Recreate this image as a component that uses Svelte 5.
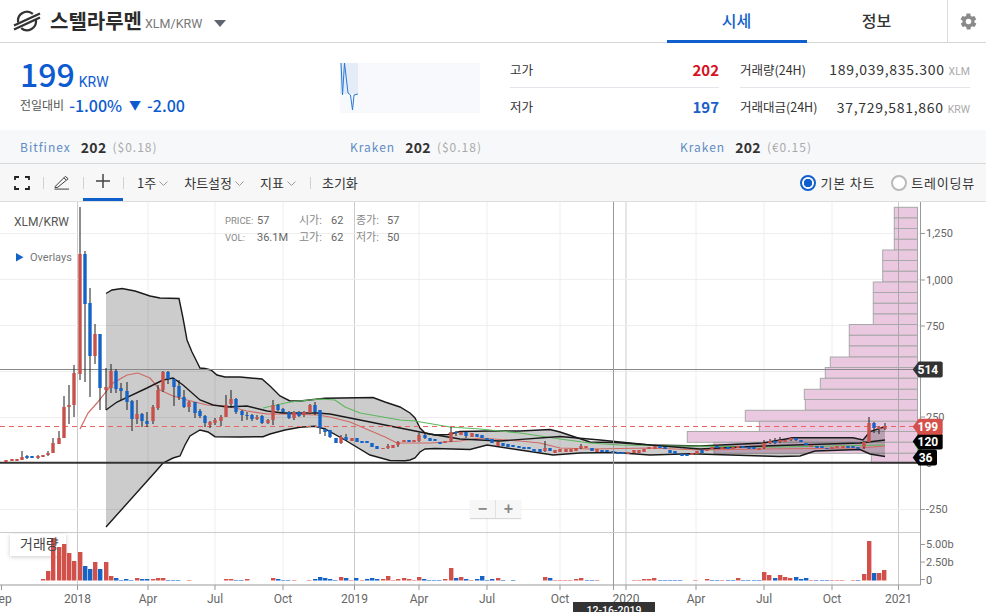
<script>
  const exchanges = [
    { name: 'Bitfinex', price: '202', sub: '($0.18)' },
    { name: 'Kraken', price: '202', sub: '($0.18)' },
    { name: 'Kraken', price: '202', sub: '(€0.15)' }
  ]

  // grid
  const monthLines = [148, 215, 283, 419, 487, 560, 696, 764, 832]
  const yearLines = [77.5, 354.5, 626, 898.5]
  const priceLines = [233.5, 279.5, 325.5, 371.5, 417.5, 509.5]
  const priceLabels = [['1,250', 237], ['1,000', 283.5], ['750', 329.5], ['250', 420.5], ['-250', 513]]
  const timeLabels = [['Sep', 1.5], ['2018', 77.5], ['Apr', 148], ['Jul', 215], ['Oct', 283], ['2019', 354.5], ['Apr', 419], ['Jul', 487], ['Oct', 560], ['2020', 626], ['Apr', 696], ['Jul', 764], ['Oct', 832], ['2021', 898.5]]

  // volume profile rows: left edge, top, bottom
  const profile = [
    [894.3, 207.3, 218], [894.3, 218, 228.5], [894.3, 228.5, 239.3], [894.3, 239.3, 250],
    [882.7, 250, 260.5], [882.7, 260.5, 271.3], [882.7, 271.3, 282],
    [873.3, 282, 292.5], [873.3, 292.5, 303.3], [873.3, 303.3, 314], [873.3, 314, 324.5],
    [849.3, 324.5, 335.3], [849.3, 335.3, 346], [849.3, 346, 357],
    [830.3, 357, 367.5], [825.3, 367.5, 378.3], [820.3, 378.3, 389.3], [804.3, 389.3, 399.5], [805.3, 399.5, 410.3],
    [745.3, 410.3, 421.3], [759.3, 421.3, 431.5], [687.3, 431.5, 442.3], [714, 442.3, 453.3], [871.3, 453.3, 463]
  ]

  // bollinger band + moving averages
  const upper = '106,293.5 112,290 122,288.5 135,291 150,296 160,298 179,298.5 183,318 187,340 192,352 196,360 200,368 205,368.5 211,370 217,375 225,377 240,377 262,379 270,386 280,396 290,401 300,401 325,398.3 373,397.5 385,402 400,407 410,413 415,418 420,428 425,433 435,435 448,434.5 460,431.5 490,431 520,431 550,429.5 560,432 575,437 590,442 615,442.5 650,445 700,446 763,443 793,437.7 853,437.7 863,440 870,431.7 885,426.7'
  const lower = '885,456.5 870,454 860,449.5 830,450.5 815,451 800,456 780,456.5 763,456 690,453.8 650,455 615,452.5 580,453 553,455 520,450 487,445 470,449.5 435,448.5 425,449 420,452 415,458 410,460 405,460.7 390,460.5 370,455 345,440 325,429 315,426.3 300,427.3 285,430 270,434 263,436.7 240,437 215,436.7 208,432 200,430 190,436 185,445 180,456 173,458 163,463 157,470 106,527'
  const midLine = '106,410 117,402 147,388 163,380 173,378 183,385 200,400 213,405 227,407 247,406 267,411 283,413 317,413 330,414 360,420 400,428 430,434 460,439 500,441 560,436.5 600,440 650,445 700,449 763,446 860,443 885,440'
  const redLine = '80,429 88,413 97,403 113,383 127,375 138,373 150,378 160,390 173,396 187,400 207,405 227,406 247,411 267,414 287,414 317,415 330,417 350,422 385,437 397,443 430,443 460,441 480,438 520,441 540,443 560,448 590,449 650,448 700,450 763,449 860,448 885,446'
  const greenLine = '263,408 290,402 320,399 335,400 345,407 360,413 400,420 415,421 450,427 480,429 520,433 560,439 590,443 620,445 680,446 780,447 885,445'

  // candles: x colour top bottom wickTop wickBottom
  const candleData = '6r460,462 12r459,461 17r459,461 22r457,460,451,460 27b456,458,455,459 32b456,458 38r456,458,455,459 43r455,457 48r453,455,451,456 53r443,453,438,453 59r438,444,431,444 64r407,438,396,438 69r405,407,385,424 74r373,405,365,417 80r254,374,207,380 85b254,304,251,382 90b303,356,288,397 95r334,356,324,364 100b334,388,334,410 106r387,390,368,410 111r371,388,364,393 116b371,389,369,393 121b388,391,383,400 127b391,402,382,410 132b401,419,400,431 137r414,419,400,424 142b414,421,413,427 147b421,424,412,427 153r407,421,405,424 158r390,408,385,410 163r372,390,371,392 168b372,379,371,384 174b379,387,378,406 179b386,397,380,400 184b397,407,390,408 189r402,407,401,412 195b402,413,403,418 200b411,416,409,418 205b416,423,415,427 210r422,425,421,428 215r420,423,418,425 221r417,421,415,426 226r405,417,395,417 231r399,404,390,408 236b399,412,398,414 242b411,415,410,421 247b415,416,412,420 252b415,419,414,421 257r417,419,415,420 262b416,423,415,424 268r420,423,419,424 273r405,420,400,425 278b405,410,404,411 283b409,412,408,413 289b412,418,411,419 294r412,418,411,420 299b412,416,411,417 304r412,415,411,417 310r405,413,404,414 315b405,412,402,415 320b410,428,410,434 325b429,432,428,436 330b430,437,430,438 336b438,443 341r437,443,435,444 346b437,440,434,441 352r438,441 357b438,442 362b441,443 367b441,443 372b443,447 377b446,449 383r448,449 388r446,448,444,449 393r445,448 398r442,445,441,447 404r440,442 409b440,442 414r440,442 419r435,441,433,442 425b435,438,433,439 430b438,441 435b439,441 440b442,444 445r441,443 451r432,441,427,442 456b432,433,431,436 461r432,435 466b432,436,431,438 472r433,437 477b434,437 482b435,438 487b438,440 492b439,443 498r442,446,441,447 503b443,446 508b444,447 513b445,447 519b446,448 524b447,449 529b447,449 534b449,452 540b449,452 545r448,451,441,452 550b448,451 555r450,453 560r449,452 566r449,452 571r449,452 576r448,451 581r446,448,444,449 586r446,448 592b448,451 597r449,452 602b450,452 607b450,452 613b451,453 618b452,454 623b452,454 628r452,454 634r450,453 639r450,453 644r449,452 649r447,449 655r446,449 660b446,448 665b447,449 670b450,453 675b451,454 682b454,456 687b454,456 692r453,455 697r451,454 702b450,453 707r449,451 712r447,449 717b446,448 722r447,449 728b447,449 733r447,449 738r446,448 743b446,448 749b447,449 754b447,449 759r448,450 764r443,448,440,449 770r441,443,439,444 775b441,443,438,444 780r440,442,437,443 785r440,442 791r438,440,437,441 796b438,440,437,441 801b440,442 806b443,445 811r445,447 817b446,448 822b446,448 827b448,449 832r447,449 837r446,448 843r446,448 848b446,448 853b446,448 858b447,449 864r442,447,441,449 869r423,442,417,442 874b423,428,422,433 879r427,429,426,434 885r426,429,423,430'
  const candles = candleData.split(' ').map((item) => {
    const match = item.match(/^(\d+)([rb])(.+)$/)
    const [top, bottom, wickTop = top, wickBottom = bottom] = match[3].split(',').map(Number)
    return { x: +match[1], up: match[2] === 'r', top, bottom, wickTop, wickBottom }
  })

  // volume: x colour top (580 = only the pale dash)
  const volumeData = '43r579 48r571 53r538 59r547 64r544 69r553 74r561 80r552 85b566 90b569 95r562 100b569 106r562 111r576 116b578 121b580 126b579 131b580 137r578 142b579 147b579 153r579 158r578 163r578 168b580 173b580 178b580 189r580 226r579 231r579 236b580 241b580 247r579 273r578 278b579 283b580 288b580 294r580 309r580 315b579 320b577 325b578 330b579 335b580 341r577 346b578 351r580 356b578 362r580 367b579 372b578 377b579 383r579 388r576 393r580 398r579 404r578 409r579 414r580 419r577 424b579 429b580 434b580 439b580 445r579 451r568 456b578 461r577 466b579 471r580 477b579 482b576 487b580 492b579 498r578 503b580 513b580 545r577 550b578 555r580 560r580 565r580 570r580 576r579 581r578 587b580 592b580 597r580 634r580 639r580 644r579 649r579 654r578 660b580 665b580 670b580 675b580 680b580 695r580 707r579 712b580 717b580 722r580 728b580 733b580 738r578 743b580 748b580 754b580 759b580 764r572 769r575 775b578 780r575 785r577 790r578 796b577 801b579 806b578 811r580 816b580 822b580 827b580 832r580 837r580 842r580 853r580 858b580 864r574 869r541 874b573 879r573 884r570'
  const volumes = volumeData.split(' ').map((item) => {
    const match = item.match(/^(\d+)([rb])(\d+)$/)
    return { x: +match[1], up: match[2] === 'r', top: +match[3] }
  })

  const priceTags = [
    { y: 369.5, label: '514', right: 942.7, fill: '#333333' },
    { y: 441.5, label: '120', right: 942.7, fill: '#000000' },
    { y: 457.5, label: '36', right: 937, fill: '#000000' },
    { y: 426.8, label: '199', right: 942.7, fill: '#d5504a' }
  ]
</script>

<div class="page">
  <header class="top">
    <div class="coin">
      <svg class="logo" viewBox="0 0 28 24" width="28" height="24">
        <path d="M5.2 13.5a9 9 0 0 1 14.6-8.6M22.8 10.5a9 9 0 0 1-14.6 8.6" fill="none" stroke="#333" stroke-width="2.2" />
        <path d="M1 16.5 27 4.5M1 20.5 27 8.5" fill="none" stroke="#333" stroke-width="2.4" />
      </svg>
      <h1>스텔라루멘</h1>
      <span class="pair">XLM/KRW</span>
      <span class="caret"></span>
    </div>
    <nav class="tabs">
      <span class="tab tab--active">시세</span>
      <span class="tab">정보</span>
    </nav>
    <div class="gear">
      <svg viewBox="0 0 24 24" width="19" height="19">
        <path fill="#8a8a8a" d="M19.4 13c.1-.3.1-.7.1-1s0-.7-.1-1l2.1-1.6c.2-.2.2-.4.1-.6l-2-3.5c-.1-.2-.4-.3-.6-.2l-2.5 1a7 7 0 0 0-1.7-1l-.4-2.6c0-.3-.2-.5-.5-.5h-4c-.3 0-.5.2-.5.5l-.4 2.6c-.6.3-1.2.6-1.7 1l-2.5-1c-.2-.1-.5 0-.6.2l-2 3.5c-.1.2-.1.5.1.6L4.6 11c-.1.3-.1.7-.1 1s0 .7.1 1l-2.1 1.6c-.2.2-.2.4-.1.6l2 3.5c.1.2.4.3.6.2l2.5-1c.5.4 1.1.7 1.7 1l.4 2.6c0 .3.2.5.5.5h4c.3 0 .5-.2.5-.5l.4-2.6c.6-.3 1.2-.6 1.7-1l2.5 1c.2.1.5 0 .6-.2l2-3.5c.1-.2.1-.5-.1-.6L19.4 13zM12 15.5a3.5 3.5 0 1 1 0-7 3.5 3.5 0 0 1 0 7z" />
      </svg>
    </div>
  </header>

  <section class="summary">
    <div class="price">
      <div class="price__now"><strong>199</strong><span>KRW</span></div>
      <div class="price__change">
        <span class="price__label">전일대비</span>
        <b>-1.00%</b>
        <b class="price__arrow">▼</b>
        <b>-2.00</b>
      </div>
    </div>
    <div class="spark">
      <svg viewBox="340 63 140 50" width="140" height="50">
        <rect x="340" y="63" width="140" height="50" fill="#f7f9fc" />
        <rect x="340" y="63" width="18" height="31" fill="#e4ecf7" />
        <polyline points="341,63 342.5,95 344.5,63 348,93 350.5,95 352.5,110 354,95 358,94" fill="none" stroke="#2a78d2" stroke-width="1" />
      </svg>
    </div>
    <dl class="range">
      <div class="row"><dt>고가</dt><dd class="up">202</dd></div>
      <div class="row"><dt>저가</dt><dd class="down">197</dd></div>
    </dl>
    <dl class="volume">
      <div class="row"><dt>거래량(24H)</dt><dd>189,039,835.300 <small>XLM</small></dd></div>
      <div class="row"><dt>거래대금(24H)</dt><dd>37,729,581,860 <small>KRW</small></dd></div>
    </dl>
  </section>

  <section class="markets">
    {#each exchanges as ex}
      <div class="market">
        <span class="market__name">{ex.name}</span>
        <b>{ex.price}</b>
        <span class="market__sub">{ex.sub}</span>
      </div>
    {/each}
  </section>

  <div class="toolbar">
    <span class="tool">
      <svg viewBox="0 0 16 14" width="16" height="14"><path d="M1 4V1h4M11 1h4v3M15 10v3h-4M5 13H1v-3" fill="none" stroke="#222" stroke-width="1.8" /></svg>
    </span>
    <i class="sep"></i>
    <span class="tool">
      <svg viewBox="0 0 17 15" width="16" height="15"><path d="M1.5 11.5 10.5 2.5l2.6 2.6-9 7.4-3 .5zM10.5 2.5 12 1l3 2.5-1.9 1.6M.5 14.5h15.5" fill="none" stroke="#333" stroke-width="1" /></svg>
    </span>
    <i class="sep"></i>
    <span class="tool tool--active">
      <svg viewBox="0 0 15 15" width="14" height="14"><path d="M7.5 0v15M0 7.5h15" stroke="#444" stroke-width="1.6" /></svg>
    </span>
    <i class="sep"></i>
    <span class="menu menu--period">1주<svg class="chev" viewBox="0 0 9 5" width="9" height="5"><path d="M.5.5l4 4 4-4" fill="none" stroke="#999" /></svg></span>
    <span class="menu">차트설정<svg class="chev" viewBox="0 0 9 5" width="9" height="5"><path d="M.5.5l4 4 4-4" fill="none" stroke="#999" /></svg></span>
    <span class="menu">지표<svg class="chev" viewBox="0 0 9 5" width="9" height="5"><path d="M.5.5l4 4 4-4" fill="none" stroke="#999" /></svg></span>
    <i class="sep sep--reset"></i>
    <span class="menu">초기화</span>
    <div class="views">
      <label class="view"><span class="radio radio--on"></span>기본 차트</label>
      <label class="view"><span class="radio"></span>트레이딩뷰</label>
    </div>
  </div>

  <div class="chart">
    <svg class="plot" viewBox="0 202 986 410" width="986" height="410">
      {#each monthLines as x}
        <line x1={x} x2={x} y1="202" y2="585" stroke="#eeeeee" />
      {/each}
      {#each yearLines as x}
        <line x1={x} x2={x} y1="202" y2="585" stroke="#cccccc" />
      {/each}
      {#each priceLines as y}
        <line x1="0" x2="920" y1={y} y2={y} stroke="#eeeeee" />
      {/each}

      {#each profile as [left, top, bottom]}
        <rect x={left} y={top} width={917.5 - left} height={bottom - top} fill="#e9c8e0" stroke="#a8a8a8" />
      {/each}
      <line x1="898.5" x2="898.5" y1="207" y2="463" stroke="#a8a8a8" />

      <polygon points={upper + ' ' + lower} fill="rgba(0,0,0,0.2)" />
      <polyline points={upper} class="band" />
      <polyline points={lower} class="band" />
      <polyline points={greenLine} fill="none" stroke="#5cb85c" stroke-width="1.2" />
      <polyline points={redLine} fill="none" stroke="#cf6a64" stroke-width="1.2" />
      <polyline points={midLine} class="band" />

      <line x1="0" x2="920" y1="426.5" y2="426.5" stroke="#e8645e" stroke-dasharray="5 4" />
      <line x1="0" x2="920" y1="369.5" y2="369.5" stroke="#888888" />
      <line x1="0" x2="920" y1="462.8" y2="462.8" stroke="#333333" stroke-width="2" />

      {#each candles as c}
        <line x1={c.x} x2={c.x} y1={c.wickTop} y2={c.wickBottom} stroke="#1c1c1c" />
        <rect x={c.x - 1.7} y={c.top} width="3.4" height={c.bottom - c.top} fill={c.up ? '#c8504a' : '#1563c7'} />
      {/each}

      <line x1="613.5" x2="613.5" y1="202" y2="590" stroke="#999999" />

      <rect class="vol-tag" x="10" y="534" width="56" height="22" fill="#ffffff" />
      <line x1="0" x2="920" y1="532.5" y2="532.5" stroke="#cccccc" />
      {#each volumes as v}
        <rect x={v.x - 2} y="580" width="4.4" height="1" fill={v.up ? '#f0a8a4' : '#7faae6'} />
        {#if v.top < 580}
          <rect x={v.x - 2} y={v.top} width="4.4" height={580 - v.top} fill={v.up ? '#d1504a' : '#1563c7'} />
        {/if}
      {/each}
      <text class="vol-label" x="20" y="549">거래량</text>

      <text class="symbol" x="14" y="226">XLM/KRW</text>
      <path d="M16 253v8.5l7.5-4.25z" fill="#1563c7" />
      <text class="overlays" x="30" y="261">Overlays</text>

      <text class="legend" x="225" y="224">PRICE:</text>
      <text class="legend legend--value" x="257" y="224">57</text>
      <text class="legend legend--ko" x="299" y="224">시가:</text>
      <text class="legend legend--value" x="331" y="224">62</text>
      <text class="legend legend--ko" x="356" y="224">종가:</text>
      <text class="legend legend--value" x="387" y="224">57</text>
      <text class="legend" x="225" y="241">VOL:</text>
      <text class="legend legend--value" x="257" y="241">36.1M</text>
      <text class="legend legend--ko" x="299" y="241">고가:</text>
      <text class="legend legend--value" x="331" y="241">62</text>
      <text class="legend legend--ko" x="356" y="241">저가:</text>
      <text class="legend legend--value" x="387" y="241">50</text>

      <line x1="920.5" x2="920.5" y1="202" y2="585" stroke="#999999" />
      <line x1="0" x2="920.5" y1="585" y2="585" stroke="#999999" />
      {#each priceLabels as [label, y]}
        <line x1="920" x2="925" y1={y - 3.5} y2={y - 3.5} stroke="#999999" />
        <text class="axis" x="926" {y}>{label}</text>
      {/each}
      <text class="axis" x="926" y="467">0</text>
      <line x1="920" x2="925" y1="544.5" y2="544.5" stroke="#999999" />
      <text class="axis" x="926" y="548">5.00b</text>
      <line x1="920" x2="925" y1="562" y2="562" stroke="#999999" />
      <text class="axis" x="926" y="566">2.50b</text>
      <line x1="920" x2="925" y1="579.5" y2="579.5" stroke="#999999" />
      <text class="axis" x="926" y="583.5">0</text>

      {#each timeLabels as [label, x]}
        <line x1={x} x2={x} y1="585" y2="590" stroke="#999999" />
        <text class="time" {x} y="603">{label}</text>
      {/each}

      <polygon points="914.5,445 918,441 923,448 920,452" fill="#55c455" />
      {#each priceTags as tag}
        <path d="M912.7 {tag.y}l6-8h{tag.right - 920.7}a2 2 0 0 1 2 2v12a2 2 0 0 1-2 2h-{tag.right - 920.7}z" fill={tag.fill} />
        <text class="tag" x={tag.right - 4.5} y={tag.y + 4.5}>{tag.label}</text>
      {/each}

      <rect x="573" y="602" width="82" height="12" fill="#333333" />
      <text class="cross-date" x="614" y="614">12-16-2019</text>
    </svg>
    <div class="zoom">
      <span>−</span>
      <span>+</span>
    </div>
  </div>
</div>

<style>
  :global(body) {
    overflow: hidden;
    background: #fff;
  }

  .page {
    width: 986px;
    height: 612px;
    display: flex;
    flex-direction: column;
    font-family: "Noto Sans CJK KR", "Noto Sans", sans-serif;
    color: #333;
  }

  .top {
    height: 42px;
    display: flex;
    align-items: stretch;
    border-bottom: 1px solid #d6d6d6;
    flex: none;
  }

  .coin {
    width: 665px;
    padding-left: 13px;
    display: flex;
    align-items: center;
  }

  .logo {
    margin-right: 9px;
  }

  h1 {
    margin: 0;
    font-size: 20px;
    font-weight: 700;
    color: #2b2b2b;
    line-height: 1;
  }

  .pair {
    margin: 4px 0 0 3px;
    font-size: 12.5px;
    color: #777;
    font-family: Roboto, sans-serif;
  }

  .caret {
    margin: 4px 0 0 12px;
    border-left: 6.5px solid transparent;
    border-right: 6.5px solid transparent;
    border-top: 7px solid #5f6470;
  }

  .tabs {
    display: flex;
  }

  .tab {
    width: 140px;
    height: 42px;
    box-sizing: border-box;
    text-align: center;
    font-size: 16px;
    font-weight: 500;
    line-height: 40px;
    color: #333;
  }

  .tab--active {
    color: #0f5fcc;
    border-bottom: 3px solid #0f5fcc;
    height: 43px;
  }

  .gear {
    width: 40px;
    border-left: 1px solid #dcdcdc;
    display: flex;
    align-items: center;
    justify-content: center;
    padding-left: 4px;
    box-sizing: border-box;
  }

  .summary {
    height: 87px;
    flex: none;
    display: flex;
    box-sizing: border-box;
    padding-left: 20px;
    position: relative;
  }

  .price {
    width: 320px;
    padding-top: 9px;
  }

  .price__now {
    display: flex;
    align-items: baseline;
    color: #0c5ad0;
    height: 42px;
  }

  .price__now strong {
    font-size: 32px;
    font-weight: 500;
    line-height: 42px;
  }

  .price__now span {
    font-size: 14px;
    margin-left: 4px;
    font-family: Roboto, sans-serif;
  }

  .price__change {
    display: flex;
    align-items: center;
    gap: 5px;
    font-size: 16px;
    color: #0c5ad0;
    line-height: 22px;
  }

  .price__change b {
    font-weight: 500;
  }

  .price__arrow {
    font-size: 12px;
    margin: 0 1px 0 2px;
  }

  .price__label {
    font-size: 12px;
    color: #555;
  }

  .spark {
    width: 170px;
    padding-top: 20px;
    line-height: 0;
  }

  dl {
    margin: 0;
  }

  .row {
    display: flex;
    justify-content: space-between;
    align-items: center;
    height: 37px;
    font-size: 12.5px;
  }

  .row:first-child {
    height: 45px;
    padding-top: 8px;
    box-sizing: border-box;
    border-bottom: 1px solid #e3e5ea;
  }

  dd {
    margin: 0;
  }

  .range {
    width: 209px;
    margin-right: 21px;
  }

  .range dd {
    font-size: 15px;
    font-weight: 700;
  }

  .up {
    color: #d8111e;
  }

  .down {
    color: #1a5fc8;
  }

  .volume {
    width: 230px;
  }

  .volume dd {
    font-size: 14px;
    letter-spacing: 0.7px;
  }

  small {
    font-size: 10.5px;
    color: #aaa;
    letter-spacing: 0;
    font-family: Roboto, sans-serif;
  }

  .markets {
    height: 33px;
    flex: none;
    display: grid;
    grid-template-columns: 330px 330px 1fr;
    padding-left: 20px;
    align-items: center;
    background: #f7f8fa;
    border-bottom: 1px solid #d9d9d9;
    font-size: 12px;
    letter-spacing: 1px;
  }

  .market {
    display: flex;
    align-items: center;
  }

  .market__name {
    color: #5f8cc4;
    margin-right: 10px;
  }

  .market b {
    font-size: 14px;
    font-weight: 700;
    color: #333;
    letter-spacing: 0.3px;
    margin-right: 6px;
  }

  .market__sub {
    color: #aaa;
  }

  .toolbar {
    height: 37px;
    flex: none;
    display: flex;
    align-items: center;
    background: #f7f7f8;
    font-size: 13px;
    color: #333;
    padding-left: 14px;
    border-bottom: 1px solid #ddd;
  }

  .tool {
    display: flex;
    line-height: 0;
  }

  .sep {
    width: 1px;
    height: 12px;
    background: #d2d2d2;
    margin: 0 10px 0 13px;
  }

  .tool--active {
    height: 37px;
    width: 40px;
    margin: 0 -13px 0 -11px;
    align-items: center;
    justify-content: center;
    box-sizing: border-box;
    border-bottom: 3px solid #0f5fcc;
  }

  .menu {
    display: flex;
    align-items: center;
    margin-right: 16px;
    white-space: nowrap;
  }

  .menu--period {
    margin-left: 3px;
  }

  .chev {
    margin: 2px 0 0 3px;
  }

  .sep--reset {
    margin: 0 11px 0 -2px;
  }

  .views {
    margin-left: auto;
    display: flex;
    gap: 16px;
    padding-right: 11px;
  }

  .view {
    display: flex;
    align-items: center;
    gap: 4px;
    letter-spacing: 0.8px;
  }

  .radio {
    width: 16px;
    height: 16px;
    box-sizing: border-box;
    border-radius: 50%;
    border: 2px solid #b9b9b9;
    background: #fff;
  }

  .radio--on {
    border-color: #0f5fcc;
    background: radial-gradient(circle, #0f5fcc 0 4px, #fff 4.5px);
  }

  .chart {
    position: relative;
    flex: 1;
    overflow: hidden;
  }

  .plot {
    display: block;
    font-family: Roboto, "Noto Sans CJK KR", sans-serif;
  }

  .band {
    fill: none;
    stroke: #1a1a1a;
    stroke-width: 1.4;
  }

  .vol-tag {
    filter: drop-shadow(0 1px 2px rgba(0, 0, 0, 0.2));
  }

  .vol-label {
    font-size: 14px;
    fill: #444;
    font-family: "Noto Sans CJK KR", sans-serif;
  }

  .symbol {
    font-size: 12px;
    fill: #555;
  }

  .overlays {
    font-size: 11px;
    fill: #777;
  }

  .legend {
    font-size: 9.5px;
    fill: #888;
  }

  .legend--ko {
    font-size: 11px;
  }

  .legend--value {
    font-size: 11px;
    fill: #666;
  }

  .axis {
    font-size: 11px;
    fill: #666;
  }

  .time {
    font-size: 12px;
    fill: #666;
    text-anchor: middle;
  }

  .tag {
    font-size: 12px;
    font-weight: 700;
    fill: #fff;
    text-anchor: end;
  }

  .cross-date {
    font-size: 10.5px;
    fill: #fff;
    text-anchor: middle;
    font-weight: 500;
  }

  .zoom {
    position: absolute;
    left: 470px;
    top: 298px;
    width: 51px;
    height: 18px;
    display: flex;
    background: #f7f7f7;
    box-shadow: 0 1px 1px rgba(0, 0, 0, 0.15);
    color: #888;
    font: 700 16px/18px "Liberation Sans", sans-serif;
  }

  .zoom span {
    flex: 1;
    text-align: center;
  }

  .zoom span + span {
    border-left: 1px solid #e2e2e2;
  }
</style>
